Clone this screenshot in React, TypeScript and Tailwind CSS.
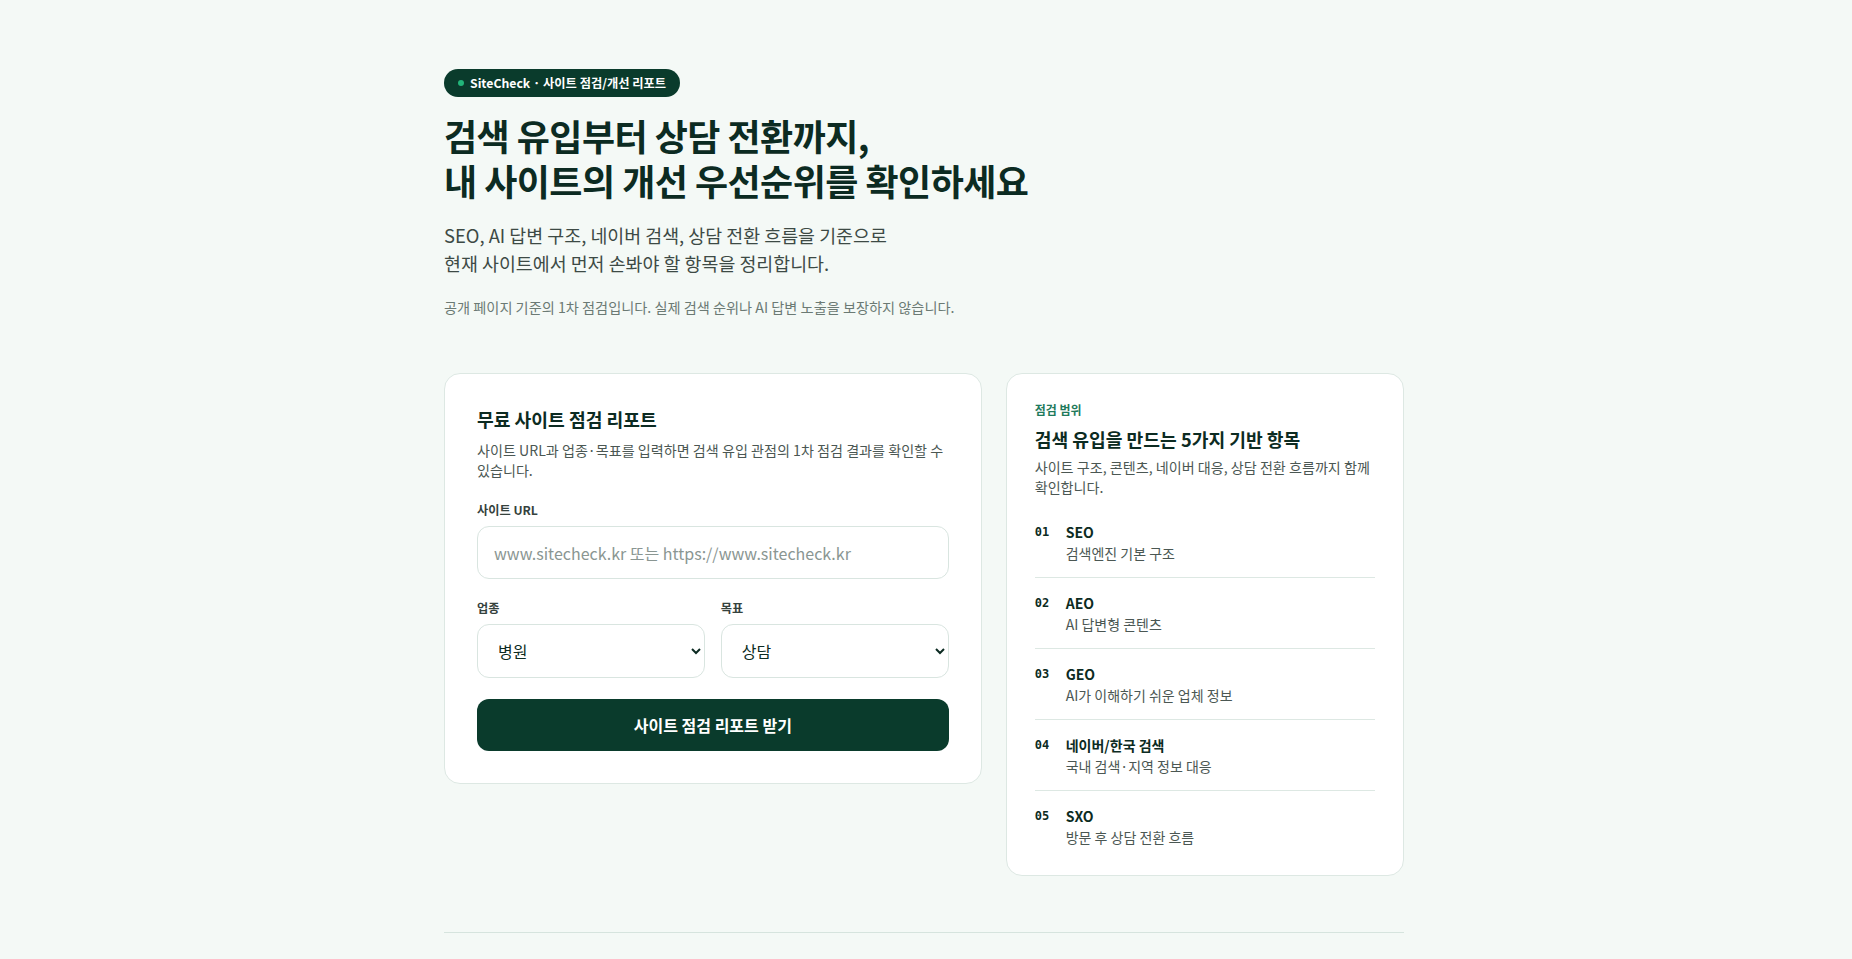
import React from 'react';

const scopeItems = [
  { no: '01', title: 'SEO', desc: '검색엔진 기본 구조' },
  { no: '02', title: 'AEO', desc: 'AI 답변형 콘텐츠' },
  { no: '03', title: 'GEO', desc: 'AI가 이해하기 쉬운 업체 정보' },
  { no: '04', title: '네이버/한국 검색', desc: '국내 검색·지역 정보 대응' },
  { no: '05', title: 'SXO', desc: '방문 후 상담 전환 흐름' },
];

const App: React.FC = () => {
  return (
    <div className="min-h-screen bg-[#f4f9f6] font-['Noto_Sans_CJK_KR','Noto_Sans',sans-serif] text-[#0c2b22]">
      <main className="mx-auto w-[964px] pr-1 pt-[69px] pb-10">
        {/* Hero */}
        <section>
          <div className="flex">
            <span className="flex h-7 items-center gap-1.5 rounded-full bg-[#0a3b2c] px-3.5 text-[12.25px] font-bold text-white">
              <span className="h-1.5 w-1.5 rounded-full bg-[#22b57a]" />
              SiteCheck · 사이트 점검/개선 리포트
            </span>
          </div>
          <h1 className="mt-4 text-[36px] font-bold leading-[45px] tracking-[-0.015em] text-[#0c2b22]">
            검색 유입부터 상담 전환까지,
            <br />
            내 사이트의 개선 우선순위를 확인하세요
          </h1>
          <p className="mt-[18px] text-[18.4px] leading-[28px] text-[#3d4a45]">
            SEO, AI 답변 구조, 네이버 검색, 상담 전환 흐름을 기준으로
            <br />
            현재 사이트에서 먼저 손봐야 할 항목을 정리합니다.
          </p>
          <p className="mt-5 text-[14.2px] leading-5 text-[#6b7a74]">
            공개 페이지 기준의 1차 점검입니다. 실제 검색 순위나 AI 답변 노출을 보장하지 않습니다.
          </p>
        </section>

        {/* Cards */}
        <section className="mt-14 grid grid-cols-[minmax(0,1.35fr)_minmax(0,1fr)] items-start gap-6">
          {/* Form card */}
          <div className="rounded-2xl border border-[#dde8e3] bg-white p-8">
            <h2 className="text-[18.2px] font-bold leading-[26px] text-[#0c2b22]">무료 사이트 점검 리포트</h2>
            <p className="mt-2 text-[14.1px] leading-5 text-[#4b5753]">
              사이트 URL과 업종·목표를 입력하면 검색 유입 관점의 1차 점검 결과를 확인할 수 있습니다.
            </p>

            <label className="mt-[22px] block text-[12.2px] font-bold leading-4 text-[#35423d]">사이트 URL</label>
            <input
              type="text"
              placeholder="www.sitecheck.kr 또는 https://www.sitecheck.kr"
              className="mt-2 block h-[53px] w-full rounded-xl border border-[#d9e5e0] bg-white px-4 text-[16px] text-[#0c2b22] outline-none placeholder:text-[#8a9692]"
            />

            <div className="mt-[21px] grid grid-cols-2 gap-4">
              <div>
                <label className="block text-[12.2px] font-bold leading-4 text-[#35423d]">업종</label>
                <select
                  defaultValue="병원"
                  className="mt-2 block h-[54px] w-full rounded-xl border border-[#d9e5e0] bg-white pl-4 pr-1 text-[16px] text-[#0c2b22]"
                >
                  <option>병원</option>
                  <option>학원</option>
                  <option>법률</option>
                </select>
              </div>
              <div>
                <label className="block text-[12.2px] font-bold leading-4 text-[#35423d]">목표</label>
                <select
                  defaultValue="상담"
                  className="mt-2 block h-[54px] w-full rounded-xl border border-[#d9e5e0] bg-white pl-4 pr-1 text-[16px] text-[#0c2b22]"
                >
                  <option>상담</option>
                  <option>예약</option>
                  <option>문의</option>
                </select>
              </div>
            </div>

            <button className="mt-[21px] flex h-[52px] w-full items-center justify-center rounded-xl bg-[#0a3b2c] text-[16px] font-bold text-white">
              사이트 점검 리포트 받기
            </button>
          </div>

          {/* Scope card */}
          <div className="rounded-2xl border border-[#dde8e3] bg-white p-7">
            <div className="text-[12px] font-bold leading-4 text-[#1f7a5c]">점검 범위</div>
            <h3 className="mt-2 text-[18.2px] font-bold leading-[26px] text-[#0c2b22]">
              검색 유입을 만드는 5가지 기반 항목
            </h3>
            <p className="mt-[5px] text-[14.1px] leading-5 text-[#4b5753]">
              사이트 구조, 콘텐츠, 네이버 대응, 상담 전환 흐름까지 함께 확인합니다.
            </p>
            <ul className="mt-[10px]">
              {scopeItems.map((item, i) => (
                <li
                  key={item.no}
                  className={`flex gap-[17px] pt-[14px] ${i > 0 ? 'border-t border-[#dde8e3]' : ''} ${i < scopeItems.length - 1 ? 'pb-[14px]' : ''}`}
                >
                  <span className="w-[14px] pt-[3px] font-['DejaVu_Sans_Mono',monospace] text-[12px] font-bold leading-4 text-[#0c2b22]">
                    {item.no}
                  </span>
                  <div>
                    <div className="text-[14px] font-bold leading-[22px] text-[#0c2b22]">{item.title}</div>
                    <div className="text-[14px] leading-5 text-[#4b5753]">{item.desc}</div>
                  </div>
                </li>
              ))}
            </ul>
          </div>
        </section>

        <div className="mt-14 border-t border-[#d6e4de]" />
      </main>
    </div>
  );
};

export default App;
